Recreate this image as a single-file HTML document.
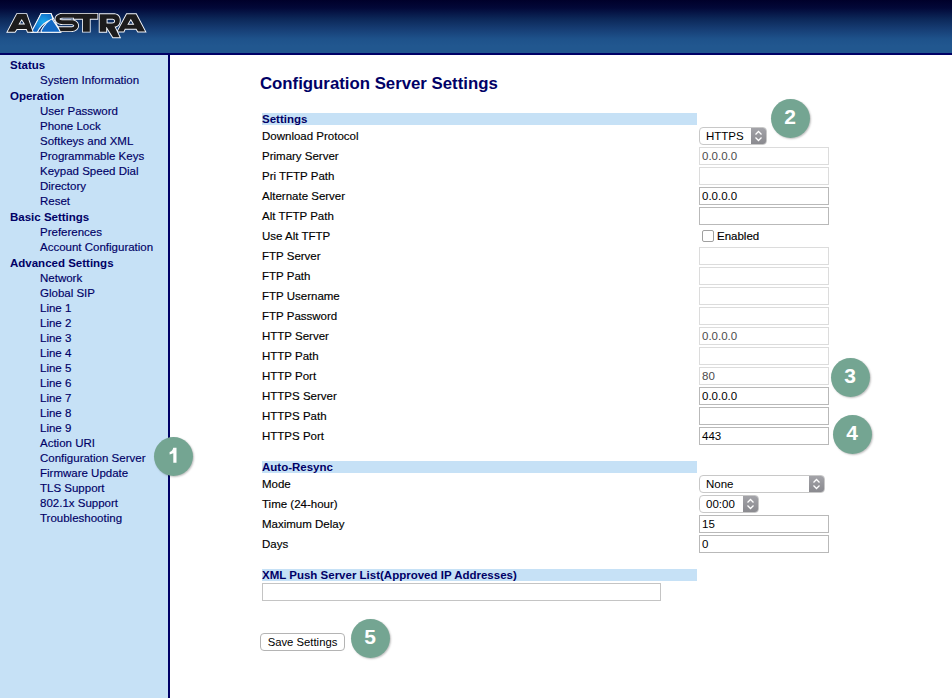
<!DOCTYPE html>
<html><head><meta charset="utf-8">
<style>
html,body{margin:0;padding:0}
body{width:952px;height:698px;overflow:hidden;position:relative;background:#fff;font-family:"Liberation Sans",sans-serif;}
#hdr{position:absolute;left:0;top:0;width:952px;height:53px;background:linear-gradient(to bottom,#00002a 0px,#020838 8px,#0c2859 19px,#163d74 29px,#1e528b 39px,#21578f 46px,#21578f 53px);}
#hline{position:absolute;left:0;top:53px;width:952px;height:2px;background:#000066;}
#side{position:absolute;left:0;top:55px;width:168px;height:643px;background:#c6e1f6;}
#vline{position:absolute;left:168px;top:55px;width:2px;height:643px;background:#000066;}
.sh,.si{position:absolute;white-space:nowrap;font-size:11.5px;line-height:14px;color:#000066;}
.sh{font-weight:bold;}
.si,.lbl,.chkl{-webkit-text-stroke:0.15px currentColor;}
.title{position:absolute;left:260px;top:74px;font-size:16.8px;line-height:20px;font-weight:bold;color:#000066;white-space:nowrap;}
.bar{position:absolute;left:262px;width:435px;height:12px;background:#c6e1f6;}
.bar span{position:absolute;left:0;top:-1px;font-size:11.5px;line-height:14px;font-weight:bold;color:#000066;white-space:nowrap;}
.lbl{position:absolute;left:262px;font-size:11.5px;line-height:14px;color:#000;white-space:nowrap;}
.inp{position:absolute;height:18px;border:1px solid #b9b9b9;background:#fff;box-sizing:border-box;}
.inp span{position:absolute;left:2px;top:1px;font-size:11.5px;line-height:14px;color:#000;white-space:nowrap;}
.inp.dis{border-color:#dcdcdc;}
.inp.dis span{color:#4c4c4c;}
.inp.xml{border-color:#c4c4c4;}
.sel{position:absolute;height:18px;box-sizing:border-box;border:1px solid #c8c8c8;border-radius:4px;background:#fff;overflow:hidden;}
.sel .st{position:absolute;left:6px;top:1px;font-size:11.5px;line-height:14px;color:#000;white-space:nowrap;}
.sel .arr{position:absolute;right:0;top:0;width:15px;height:16px;background:linear-gradient(#a3a3a8,#8a8a8f);}
.sel .arr svg{position:absolute;left:0;top:-1px}
.chk{position:absolute;left:702px;width:10px;height:10px;border:1px solid #a0a0a0;border-radius:2px;background:#fff;}
.chkl{position:absolute;left:717px;font-size:11.5px;line-height:14px;color:#000;white-space:nowrap;}
.btn{position:absolute;left:260px;top:633px;width:83px;height:16px;border:1px solid #b4b4b4;border-radius:4px;background:#fff;font-size:11.3px;line-height:16px;text-align:center;color:#000;white-space:nowrap;}
.circ{position:absolute;width:39px;height:39px;border-radius:50%;background:#74a592;color:#fff;font-weight:bold;font-size:21px;line-height:36px;text-align:center;box-shadow:1px 1px 2px rgba(0,0,0,0.25);}
#logo{position:absolute;left:0;top:0;}
</style></head><body>
<div id="hdr"></div>
<div id="hline"></div>
<div id="side"></div>
<div id="vline"></div>
<svg width="160" height="45" viewBox="0 0 160 45" style="position:absolute;left:0;top:0"><defs><radialGradient id="bl" cx="0.55" cy="0.45" r="0.6"><stop offset="0" stop-color="#1aa9ee"/><stop offset="1" stop-color="#1268c4"/></radialGradient></defs><path d="M124.23 32.55 L125.43 29.75 L135.85 29.75 L137.45 32.55 L146.67 32.55 L136.58 13.25 L126.23 13.25 L116.02 32.55 Z M132.65 23.85 L128.95 23.85 L130.80 20.69 Z" fill="#f6f8fc"/><path d="M123.60 31.60 L124.80 28.80 L136.40 28.80 L138.00 31.60 L145.10 31.60 L136.00 14.20 L126.80 14.20 L117.60 31.60 Z M134.30 24.80 L127.30 24.80 L130.80 18.80 Z" fill="#1c1b1c" fill-rule="evenodd"/><path d="M98.75 32.65 L107.15 32.65 L107.15 29.73 L112.58 38.25 L121.11 38.25 L115.92 27.38 L116.53 27.19 L117.15 26.92 L117.73 26.59 L118.27 26.18 L118.77 25.72 L119.21 25.21 L119.61 24.64 L119.95 24.03 L120.23 23.37 L120.45 22.68 L120.62 21.95 L120.72 21.19 L120.75 20.41 L120.73 19.76 L120.67 19.10 L120.55 18.44 L120.39 17.79 L120.16 17.14 L119.86 16.51 L119.48 15.91 L119.03 15.34 L118.49 14.82 L117.87 14.36 L117.16 13.97 L116.37 13.66 L115.50 13.43 L114.54 13.30 L113.52 13.25 L98.75 13.25 Z M111.98 19.75 L112.35 19.76 L112.66 19.80 L112.93 19.85 L113.16 19.91 L113.35 19.99 L113.51 20.08 L113.64 20.16 L113.74 20.26 L113.82 20.35 L113.89 20.45 L113.95 20.56 L113.99 20.68 L114.02 20.81 L114.04 20.95 L114.05 21.10 L114.04 21.27 L114.02 21.43 L113.99 21.56 L113.94 21.69 L113.89 21.79 L113.83 21.89 L113.75 21.98 L113.65 22.06 L113.53 22.14 L113.37 22.22 L113.18 22.30 L112.95 22.36 L112.68 22.41 L112.36 22.44 L111.99 22.45 L107.55 22.45 L107.55 19.75 Z" fill="#f6f8fc"/><path d="M99.70 31.70 L106.20 31.70 L106.20 27.10 L106.60 27.10 L113.10 37.30 L119.60 37.30 L114.50 26.60 L115.09 26.57 L115.66 26.47 L116.20 26.30 L116.72 26.08 L117.21 25.79 L117.66 25.45 L118.08 25.06 L118.46 24.62 L118.80 24.14 L119.09 23.61 L119.34 23.04 L119.54 22.43 L119.68 21.78 L119.77 21.11 L119.80 20.40 L119.78 19.82 L119.72 19.23 L119.62 18.64 L119.48 18.06 L119.28 17.50 L119.02 16.96 L118.71 16.45 L118.33 15.98 L117.88 15.55 L117.36 15.16 L116.76 14.83 L116.08 14.57 L115.31 14.37 L114.45 14.24 L113.50 14.20 L99.70 14.20 Z M112.00 18.80 L112.42 18.81 L112.81 18.86 L113.16 18.92 L113.47 19.02 L113.76 19.13 L114.01 19.26 L114.23 19.42 L114.42 19.59 L114.58 19.77 L114.71 19.97 L114.82 20.18 L114.90 20.40 L114.96 20.63 L114.99 20.86 L115.00 21.10 L114.99 21.36 L114.96 21.60 L114.90 21.84 L114.82 22.06 L114.71 22.27 L114.58 22.47 L114.42 22.65 L114.23 22.82 L114.01 22.96 L113.76 23.09 L113.47 23.20 L113.16 23.29 L112.81 23.35 L112.42 23.39 L112.00 23.40 L106.60 23.40 L106.60 18.80 Z" fill="#1c1b1c" fill-rule="evenodd"/><path d="M40.82 13.05 L30.53 32.75 L61.46 32.75 L51.28 13.05 Z" fill="#f6f8fc"/><path d="M40.85 31.80 L40.92 30.31 L41.69 28.95 L42.35 27.84 L43.01 26.80 L43.68 25.82 L44.36 24.90 L45.06 24.03 L45.76 23.21 L46.49 22.45 L46.66 22.28 L45.65 22.96 L44.67 23.70 L43.72 24.50 L42.80 25.36 L41.91 26.30 L41.04 27.32 L40.19 28.42 L39.36 29.61 L38.54 30.89 L38.00 31.80 Z M53.37 19.17 L52.80 19.39 L55.89 24.05 Z" fill="#0d2a63"/><path d="M30.53 32.75 L37.44 32.75 L38.54 30.89 L39.36 29.61 L40.19 28.42 L41.04 27.32 L41.91 26.30 L42.80 25.36 L43.72 24.50 L44.67 23.70 L45.65 22.96 L46.67 22.27 L47.74 21.63 L48.86 21.04 L50.02 20.49 L51.24 19.98 L53.38 19.17 L51.39 13.05 L40.82 13.05 Z" fill="#f6f8fc"/><path d="M40.81 32.75 L61.67 32.75 L52.09 18.33 L50.46 19.29 L49.61 19.84 L48.79 20.43 L48.00 21.06 L47.23 21.73 L46.49 22.45 L45.76 23.21 L45.06 24.03 L44.36 24.90 L43.68 25.82 L43.01 26.80 L42.35 27.84 L41.69 28.95 L40.92 30.31 Z" fill="#f6f8fc"/><path d="M32.10 31.80 L41.40 14.00 L50.70 14.00 L52.20 18.60 L50.89 19.10 L49.63 19.63 L48.43 20.19 L47.28 20.81 L46.17 21.47 L45.10 22.18 L44.07 22.95 L43.08 23.79 L42.13 24.69 L41.20 25.67 L40.30 26.72 L39.42 27.85 L38.57 29.08 L37.73 30.39 L36.90 31.80 Z" fill="url(#bl)"/><path d="M41.80 31.80 L41.86 30.58 L42.51 29.43 L43.16 28.34 L43.81 27.33 L44.46 26.37 L45.12 25.48 L45.79 24.64 L46.47 23.85 L47.16 23.12 L47.87 22.43 L48.61 21.79 L49.36 21.19 L50.15 20.62 L50.96 20.10 L51.80 19.60 L59.90 31.80 Z" fill="#1268c4"/><path d="M15.30 32.75 L17.20 29.95 L26.05 29.95 L27.15 32.75 L33.94 32.75 L27.07 13.15 L16.43 13.15 L6.13 32.75 Z M23.41 23.55 L20.06 23.55 L21.71 20.75 Z" fill="#f6f8fc"/><path d="M14.80 31.80 L16.70 29.00 L26.70 29.00 L27.80 31.80 L32.60 31.80 L26.40 14.10 L17.00 14.10 L7.70 31.80 Z M25.10 24.50 L18.40 24.50 L21.70 18.90 Z" fill="#1c1b1c" fill-rule="evenodd"/><path d="M73.45 19.65 L82.05 19.65 L82.05 32.55 L90.65 32.55 L90.65 19.65 L98.25 19.65 L98.25 12.95 L83.35 12.95 L83.35 12.92 L62.99 12.92 L62.84 12.92 L61.42 13.01 L61.10 13.05 L59.88 13.29 L59.68 13.34 L59.49 13.40 L58.47 13.77 L58.25 13.86 L58.04 13.97 L57.21 14.45 L56.98 14.60 L56.77 14.78 L56.14 15.34 L55.99 15.50 L55.84 15.67 L55.71 15.85 L55.30 16.48 L55.17 16.69 L55.06 16.93 L54.98 17.16 L54.77 17.83 L54.70 18.09 L54.66 18.37 L54.64 18.63 L54.64 19.32 L54.66 19.58 L54.70 19.86 L54.77 20.12 L54.98 20.79 L55.06 21.02 L55.17 21.26 L55.30 21.47 L55.71 22.10 L55.84 22.28 L55.99 22.45 L56.14 22.61 L56.77 23.17 L56.98 23.35 L57.21 23.50 L58.04 23.98 L58.25 24.09 L58.47 24.18 L59.49 24.55 L59.68 24.61 L59.88 24.66 L61.10 24.90 L61.42 24.94 L62.84 25.03 L62.99 25.03 L70.90 25.03 L71.87 25.10 L72.52 25.24 L72.95 25.43 L73.20 25.59 L73.30 25.70 L73.20 25.81 L72.95 25.97 L72.52 26.16 L71.87 26.30 L70.90 26.37 L57.31 26.37 L60.06 32.03 L71.01 32.03 L71.18 32.02 L72.50 31.93 L72.70 31.91 L72.90 31.87 L74.04 31.62 L74.26 31.55 L74.47 31.47 L75.43 31.07 L75.66 30.96 L75.88 30.82 L76.66 30.30 L76.89 30.13 L77.09 29.93 L77.68 29.31 L77.88 29.07 L78.05 28.80 L78.44 28.12 L78.54 27.92 L78.63 27.70 L78.70 27.49 L78.89 26.76 L78.94 26.54 L78.97 26.30 L78.98 26.07 L78.98 25.33 L78.97 25.10 L78.94 24.86 L78.89 24.64 L78.70 23.91 L78.63 23.70 L78.54 23.48 L78.44 23.28 L78.05 22.60 L77.88 22.33 L77.68 22.09 L77.09 21.47 L76.89 21.27 L76.66 21.10 L75.88 20.58 L75.66 20.44 L75.43 20.33 L74.47 19.93 L74.26 19.85 L74.04 19.78 Z M60.71 18.98 L61.19 18.80 L61.98 18.65 L63.08 18.58 L73.15 18.58 L73.15 19.58 L72.90 19.53 L72.70 19.49 L72.50 19.47 L71.18 19.38 L71.01 19.37 L63.08 19.37 L61.98 19.30 L61.19 19.15 Z" fill="#f6f8fc"/><path d="M61.50 13.86 L61.24 13.89 L60.06 14.12 L59.91 14.16 L59.76 14.20 L58.77 14.56 L58.61 14.63 L58.45 14.71 L57.66 15.17 L57.49 15.29 L57.32 15.42 L56.73 15.96 L56.62 16.08 L56.51 16.20 L56.41 16.33 L56.02 16.93 L55.92 17.09 L55.85 17.26 L55.78 17.43 L55.58 18.06 L55.53 18.26 L55.50 18.45 L55.49 18.65 L55.49 19.30 L55.50 19.50 L55.53 19.69 L55.58 19.89 L55.78 20.52 L55.85 20.69 L55.92 20.86 L56.02 21.02 L56.41 21.62 L56.51 21.75 L56.62 21.87 L56.73 21.99 L57.32 22.53 L57.49 22.66 L57.66 22.78 L58.45 23.24 L58.61 23.32 L58.77 23.39 L59.76 23.75 L59.91 23.79 L60.06 23.83 L61.24 24.06 L61.50 24.09 L62.88 24.18 L63.00 24.18 L70.93 24.18 L72.00 24.25 L72.78 24.43 L73.36 24.68 L73.76 24.94 L73.99 25.20 L74.12 25.42 L74.17 25.61 L74.17 25.79 L74.12 25.98 L73.99 26.20 L73.76 26.46 L73.36 26.72 L72.78 26.97 L72.00 27.15 L70.93 27.22 L58.67 27.22 L60.59 31.18 L71.00 31.18 L71.14 31.18 L72.42 31.09 L72.58 31.07 L72.73 31.04 L73.83 30.79 L74.00 30.74 L74.16 30.68 L75.08 30.30 L75.26 30.21 L75.42 30.11 L76.16 29.61 L76.33 29.48 L76.49 29.33 L77.04 28.74 L77.19 28.56 L77.32 28.36 L77.69 27.71 L77.77 27.56 L77.83 27.41 L77.88 27.25 L78.06 26.56 L78.10 26.39 L78.12 26.22 L78.13 26.05 L78.13 25.35 L78.12 25.18 L78.10 25.01 L78.06 24.84 L77.88 24.15 L77.83 23.99 L77.77 23.84 L77.69 23.69 L77.32 23.04 L77.19 22.84 L77.04 22.66 L76.49 22.07 L76.33 21.92 L76.16 21.79 L75.42 21.29 L75.26 21.19 L75.08 21.10 L74.16 20.72 L74.00 20.66 L73.83 20.61 L72.73 20.36 L72.58 20.33 L72.42 20.31 L71.14 20.22 L71.00 20.22 L63.06 20.22 L61.87 20.15 L60.96 19.97 L60.29 19.73 L59.84 19.46 L59.58 19.23 L59.48 19.07 L59.45 19.00 L59.45 18.95 L59.48 18.88 L59.58 18.72 L59.84 18.49 L60.29 18.22 L60.96 17.98 L61.87 17.80 L63.06 17.73 L74.00 17.73 L74.00 18.80 L82.90 18.80 L82.90 31.70 L89.80 31.70 L89.80 18.80 L97.40 18.80 L97.40 13.80 L82.50 13.80 L82.50 13.77 L63.00 13.77 L62.88 13.77 Z" fill="#1c1b1c" fill-rule="evenodd"/></svg>
<div class="sh" style="left:10px;top:57.7px">Status</div>
<div class="si" style="left:40px;top:72.7px">System Information</div>
<div class="sh" style="left:10px;top:88.7px">Operation</div>
<div class="si" style="left:40px;top:103.7px">User Password</div>
<div class="si" style="left:40px;top:118.7px">Phone Lock</div>
<div class="si" style="left:40px;top:133.7px">Softkeys and XML</div>
<div class="si" style="left:40px;top:148.7px">Programmable Keys</div>
<div class="si" style="left:40px;top:163.7px">Keypad Speed Dial</div>
<div class="si" style="left:40px;top:178.7px">Directory</div>
<div class="si" style="left:40px;top:193.7px">Reset</div>
<div class="sh" style="left:10px;top:209.7px">Basic Settings</div>
<div class="si" style="left:40px;top:224.7px">Preferences</div>
<div class="si" style="left:40px;top:239.7px">Account Configuration</div>
<div class="sh" style="left:10px;top:255.7px">Advanced Settings</div>
<div class="si" style="left:40px;top:270.7px">Network</div>
<div class="si" style="left:40px;top:285.7px">Global SIP</div>
<div class="si" style="left:40px;top:300.7px">Line 1</div>
<div class="si" style="left:40px;top:315.7px">Line 2</div>
<div class="si" style="left:40px;top:330.7px">Line 3</div>
<div class="si" style="left:40px;top:345.7px">Line 4</div>
<div class="si" style="left:40px;top:360.7px">Line 5</div>
<div class="si" style="left:40px;top:375.7px">Line 6</div>
<div class="si" style="left:40px;top:390.7px">Line 7</div>
<div class="si" style="left:40px;top:405.7px">Line 8</div>
<div class="si" style="left:40px;top:420.7px">Line 9</div>
<div class="si" style="left:40px;top:435.7px">Action URI</div>
<div class="si" style="left:40px;top:450.7px">Configuration Server</div>
<div class="si" style="left:40px;top:465.7px">Firmware Update</div>
<div class="si" style="left:40px;top:480.7px">TLS Support</div>
<div class="si" style="left:40px;top:495.7px">802.1x Support</div>
<div class="si" style="left:40px;top:510.7px">Troubleshooting</div>
<div class="title">Configuration Server Settings</div>
<div class="bar" style="top:113px"><span>Settings</span></div>
<div class="lbl" style="top:129px">Download Protocol</div>
<div class="sel" style="left:699px;top:127px;width:68px"><span class="st">HTTPS</span><div class="arr"><svg width="15" height="18" viewBox="0 0 15 18"><path d="M4.5 7.5 L7.5 4.5 L10.5 7.5 M4.5 10.5 L7.5 13.5 L10.5 10.5" fill="none" stroke="#fff" stroke-width="1.3"/></svg></div></div>
<div class="lbl" style="top:149px">Primary Server</div>
<div class="inp dis" style="left:699px;top:147px;width:130px"><span>0.0.0.0</span></div>
<div class="lbl" style="top:169px">Pri TFTP Path</div>
<div class="inp dis" style="left:699px;top:167px;width:130px"><span></span></div>
<div class="lbl" style="top:189px">Alternate Server</div>
<div class="inp en" style="left:699px;top:187px;width:130px"><span>0.0.0.0</span></div>
<div class="lbl" style="top:209px">Alt TFTP Path</div>
<div class="inp en" style="left:699px;top:207px;width:130px"><span></span></div>
<div class="lbl" style="top:229px">Use Alt TFTP</div>
<div class="chk" style="top:230px"></div><div class="chkl" style="top:229px">Enabled</div>
<div class="lbl" style="top:249px">FTP Server</div>
<div class="inp dis" style="left:699px;top:247px;width:130px"><span></span></div>
<div class="lbl" style="top:269px">FTP Path</div>
<div class="inp dis" style="left:699px;top:267px;width:130px"><span></span></div>
<div class="lbl" style="top:289px">FTP Username</div>
<div class="inp dis" style="left:699px;top:287px;width:130px"><span></span></div>
<div class="lbl" style="top:309px">FTP Password</div>
<div class="inp dis" style="left:699px;top:307px;width:130px"><span></span></div>
<div class="lbl" style="top:329px">HTTP Server</div>
<div class="inp dis" style="left:699px;top:327px;width:130px"><span>0.0.0.0</span></div>
<div class="lbl" style="top:349px">HTTP Path</div>
<div class="inp dis" style="left:699px;top:347px;width:130px"><span></span></div>
<div class="lbl" style="top:369px">HTTP Port</div>
<div class="inp dis" style="left:699px;top:367px;width:130px"><span>80</span></div>
<div class="lbl" style="top:389px">HTTPS Server</div>
<div class="inp en" style="left:699px;top:387px;width:130px"><span>0.0.0.0</span></div>
<div class="lbl" style="top:409px">HTTPS Path</div>
<div class="inp en" style="left:699px;top:407px;width:130px"><span></span></div>
<div class="lbl" style="top:429px">HTTPS Port</div>
<div class="inp en" style="left:699px;top:427px;width:130px"><span>443</span></div>
<div class="bar" style="top:461px"><span>Auto-Resync</span></div>
<div class="lbl" style="top:477px">Mode</div>
<div class="sel" style="left:699px;top:475px;width:126px"><span class="st">None</span><div class="arr"><svg width="15" height="18" viewBox="0 0 15 18"><path d="M4.5 7.5 L7.5 4.5 L10.5 7.5 M4.5 10.5 L7.5 13.5 L10.5 10.5" fill="none" stroke="#fff" stroke-width="1.3"/></svg></div></div>
<div class="lbl" style="top:497px">Time (24-hour)</div>
<div class="sel" style="left:699px;top:495px;width:60px"><span class="st">00:00</span><div class="arr"><svg width="15" height="18" viewBox="0 0 15 18"><path d="M4.5 7.5 L7.5 4.5 L10.5 7.5 M4.5 10.5 L7.5 13.5 L10.5 10.5" fill="none" stroke="#fff" stroke-width="1.3"/></svg></div></div>
<div class="lbl" style="top:517px">Maximum Delay</div>
<div class="inp en" style="left:699px;top:515px;width:130px"><span>15</span></div>
<div class="lbl" style="top:537px">Days</div>
<div class="inp en" style="left:699px;top:535px;width:130px"><span>0</span></div>
<div class="bar" style="top:569px"><span>XML Push Server List(Approved IP Addresses)</span></div>
<div class="inp xml" style="left:262px;top:583px;width:399px"><span></span></div>
<div class="btn">Save Settings</div>
<div class="circ" style="left:154.3px;top:436.5px"><svg width="39" height="39" viewBox="0 0 39 39" style="position:absolute;left:0;top:0"><path d="M19.3 10.7 L22.5 10.7 L22.5 25.7 L19.3 25.7 L19.3 16.3 L15.6 17.6 L15.6 15 C17.6 14.3 18.8 13 19.3 10.7 Z" fill="#fff"/></svg></div>
<div class="circ" style="left:770.5px;top:99.2px">2</div>
<div class="circ" style="left:830.5px;top:357.5px">3</div>
<div class="circ" style="left:832.5px;top:414.5px">4</div>
<div class="circ" style="left:350.5px;top:619.2px">5</div>
</body></html>
